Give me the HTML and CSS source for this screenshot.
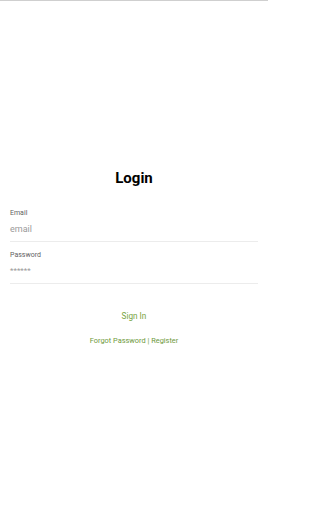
FILE: index.html
```html
<!DOCTYPE html>
<html>
<head>
<meta charset="utf-8">
<meta name="viewport" content="width=device-width, initial-scale=1">
<link rel="stylesheet" href="styles.css">
</head>
<body>
<div class="page">
  <div class="topline"></div>
  <main class="login">
    <h1 class="title">Login</h1>
    <div class="field first">
      <label class="label">Email</label>
      <div class="input">email</div>
    </div>
    <div class="field">
      <label class="label">Password</label>
      <div class="input stars">******</div>
    </div>
    <div class="signin">Sign In</div>
    <div class="links">Forgot Password | Register</div>
  </main>
</div>
</body>
</html>
```
FILE: styles.css
```css
html, body {
  margin: 0;
  padding: 0;
  background: #fff;
  font-family: Roboto, "Liberation Sans", sans-serif;
}
.page {
  width: 268px;
}
.topline {
  height: 1px;
  background: #cfcfcf;
}
.login {
  padding: 167px 10px 0 10px;
  display: flex;
  flex-direction: column;
}
.title {
  margin: 0;
  text-align: center;
  font-size: 15px;
  font-weight: 700;
  line-height: 20px;
  color: #000;
}
.field {
  display: flex;
  flex-direction: column;
  border-bottom: 1px solid #ececec;
}
.field.first { margin-top: 20px; }
.field + .field { margin-top: 8px; }
.label {
  font-size: 7px;
  line-height: 10px;
  color: #5f5f5f;
}
.input {
  font-size: 9px;
  line-height: 14px;
  padding: 4px 0 5px;
  color: #9a9a9a;
}
.stars {
  font-size: 8px;
}
.signin {
  margin-top: 25px;
  text-align: center;
  font-size: 8.2px;
  line-height: 14px;
  color: #78a442;
}
.links {
  margin-top: 12px;
  text-align: center;
  font-size: 7.4px;
  line-height: 12px;
  color: #6e9a3c;
}
```
